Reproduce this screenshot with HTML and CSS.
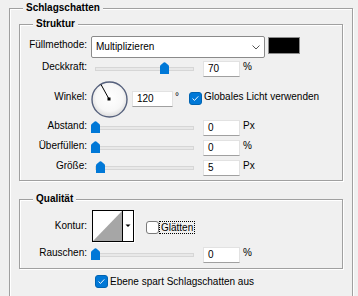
FILE: index.html
```html
<!DOCTYPE html>
<html lang="de">
<head>
    <meta charset="UTF-8">
    <title>Schlagschatten</title>
    <link rel="stylesheet" href="styles.css">
</head>
<body>
    <svg class="defs" width="0" height="0">
        <symbol id="thumb" viewBox="0 0 9 12">
            <path d="M0 4.6 Q0 3.6 1 2.8 L3.7 0.5 Q4.5 -0.1 5.3 0.5 L8 2.8 Q9 3.6 9 4.6 V12 H0 Z" fill="#0078d7"/>
        </symbol>
        <symbol id="tick" viewBox="0 0 13 13">
            <polyline points="3,6.5 5.3,8.8 9.8,4" fill="none" stroke="#fff" stroke-width="1.1"/>
        </symbol>
    </svg>

    <div class="group outer">
        <div class="group-title">Schlagschatten</div>

        <div class="group inner">
            <div class="group-title">Struktur</div>

            <div class="row row-mode">
                <span class="lbl">Füllmethode:</span>
                <div class="select">
                    <span>Multiplizieren</span>
                    <svg class="chevron" width="8" height="5" viewBox="0 0 8 5">
                        <polyline points="0.5,0.5 4,4 7.5,0.5" fill="none" stroke="#555" stroke-width="1"/>
                    </svg>
                </div>
                <div class="swatch"></div>
            </div>

            <div class="row row-field">
                <span class="lbl">Deckkraft:</span>
                <div class="slider">
                    <div class="track"></div>
                    <svg class="thumb" style="margin-left: 69px"><use href="#thumb"/></svg>
                </div>
                <div class="field">70</div>
                <span class="unit">%</span>
            </div>

            <div class="row row-angle">
                <span class="lbl">Winkel:</span>
                <svg class="dial" width="37" height="37" viewBox="0 0 37 37">
                    <defs>
                        <radialGradient id="dialFill" cx="50%" cy="45%" r="55%">
                            <stop offset="0" stop-color="#ffffff"/>
                            <stop offset="0.7" stop-color="#f7f7f7"/>
                            <stop offset="1" stop-color="#dcdcdc"/>
                        </radialGradient>
                    </defs>
                    <circle cx="18.5" cy="18.5" r="17.5" fill="url(#dialFill)" stroke="#55607c" stroke-width="1.4"/>
                    <line x1="18" y1="18" x2="10" y2="3.5" stroke="#000" stroke-width="1"/>
                    <rect x="16.5" y="16.5" width="3" height="3" fill="#000"/>
                </svg>
                <div class="field field-wide">120</div>
                <span class="unit deg">°</span>
                <span class="check on check-global"><svg><use href="#tick"/></svg></span>
                <span class="unit">Globales Licht verwenden</span>
            </div>

            <div class="row row-field row-abstand">
                <span class="lbl">Abstand:</span>
                <div class="slider">
                    <div class="track"></div>
                    <svg class="thumb" style="margin-left: 0px"><use href="#thumb"/></svg>
                </div>
                <div class="field">0</div>
                <span class="unit">Px</span>
            </div>

            <div class="row row-field row-gap">
                <span class="lbl">Überfüllen:</span>
                <div class="slider">
                    <div class="track"></div>
                    <svg class="thumb" style="margin-left: 0px"><use href="#thumb"/></svg>
                </div>
                <div class="field">0</div>
                <span class="unit">%</span>
            </div>

            <div class="row row-field row-gap">
                <span class="lbl">Größe:</span>
                <div class="slider">
                    <div class="track"></div>
                    <svg class="thumb" style="margin-left: 5px"><use href="#thumb"/></svg>
                </div>
                <div class="field">5</div>
                <span class="unit">Px</span>
            </div>
        </div>

        <div class="group inner quality">
            <div class="group-title">Qualität</div>

            <div class="row row-contour">
                <span class="lbl lbl-mid">Kontur:</span>
                <svg class="contour" width="42" height="32" viewBox="0 0 42 32">
                    <rect x="0.5" y="0.5" width="41" height="31" fill="#fff" stroke="#000"/>
                    <polygon points="1,31 30,1 30,31" fill="#a6a6a6"/>
                    <line x1="30.5" y1="0" x2="30.5" y2="32" stroke="#000"/>
                    <polygon points="33.5,14.5 38.5,14.5 36,17" fill="#000"/>
                </svg>
                <span class="check check-smooth"></span>
                <span class="focus">Glätten</span>
            </div>

            <div class="row row-field row-noise">
                <span class="lbl">Rauschen:</span>
                <div class="slider">
                    <div class="track"></div>
                    <svg class="thumb" style="margin-left: 0px"><use href="#thumb"/></svg>
                </div>
                <div class="field">0</div>
                <span class="unit">%</span>
            </div>
        </div>

        <div class="row row-knockout">
            <span class="check on"><svg><use href="#tick"/></svg></span>
            <span class="check-text">Ebene spart Schlagschatten aus</span>
        </div>
    </div>
</body>
</html>
```

FILE: styles.css
```css
* {
    box-sizing: border-box;
}

body {
    margin: 0;
    height: 296px;
    overflow: hidden;
    background: #f0f0f0;
    font-family: 'Liberation Sans', Arial, sans-serif;
    font-size: 10px;
    line-height: 12px;
    color: #000;
}

.defs {
    position: absolute;
}

/* Group boxes (etched frame + legend) */
.group {
    border: 1px solid #a0a0a0;
    box-shadow: inset 1px 1px 0 #fff, 1px 1px 0 #fff;
}

.group-title {
    width: max-content;
    margin: -7px 0 0 13px;
    padding: 0 3px;
    background: #f0f0f0;
    font-weight: bold;
}

.outer {
    width: 344px;
    height: 300px;
    margin: 8px 0 0 9px;
}

.inner {
    margin: 10px 9px 0;
    padding-bottom: 4px;
}

.quality {
    margin-top: 18px;
    padding-bottom: 5px;
}

/* Rows */
.row {
    display: flex;
    align-items: center;
}

.lbl {
    flex-shrink: 0;
    width: 67px;
    margin-bottom: 5px;
    text-align: right;
    white-space: nowrap;
}

.lbl-mid {
    margin-bottom: 0;
}

.unit {
    margin-left: 3px;
    margin-bottom: 5px;
    white-space: nowrap;
}

.row-mode {
    height: 22px;
    margin-top: 6px;
}

.row-field {
    height: 16px;
    margin-top: 3px;
}

.row-abstand {
    margin-top: 2px;
}

.row-gap {
    margin-top: 4px;
}

.row-angle {
    height: 38px;
    margin-top: 3px;
}

.row-contour {
    height: 32px;
    margin-top: 5px;
}

.row-noise {
    margin-top: 5px;
}

.row-knockout {
    height: 13px;
    margin: 6px 0 0 85px;
}

/* Dropdown + colour swatch */
.select {
    display: flex;
    align-items: center;
    justify-content: space-between;
    width: 174px;
    height: 22px;
    margin-left: 4px;
    padding: 0 4px;
    background: #fff;
    border: 1px solid #8a8a8a;
    border-radius: 2px;
}

.chevron {
    margin-top: 1px;
}

.swatch {
    align-self: flex-start;
    width: 32px;
    height: 17px;
    margin: 1px 0 0 3px;
    background: #000;
    border: 1px solid #8c8c8c;
}

/* Sliders */
.slider {
    display: grid;
    width: 103px;
    height: 16px;
    margin-left: 4px;
}

.slider > * {
    grid-area: 1 / 1;
}

.track {
    align-self: center;
    height: 4px;
    margin-left: 4px;
    background: #e8e8e8;
    border: 1px solid #d6d6d6;
}

.thumb {
    align-self: center;
    width: 9px;
    height: 12px;
    margin-bottom: 2px;
}

/* Number fields */
.field {
    width: 37px;
    height: 16px;
    margin-left: 9px;
    padding-left: 4px;
    line-height: 14px;
    background: #fff;
    border: 1px solid #e2e2e2;
    border-bottom-color: #a0a0a0;
}

.field-wide {
    width: 41px;
    margin-left: 4px;
}

.dial {
    margin-left: 4px;
}

.deg {
    margin-left: 2px;
}

/* Checkboxes */
.check {
    flex-shrink: 0;
    width: 13px;
    height: 13px;
    background: #fff;
    border: 1px solid #7a7a7a;
    border-radius: 3px;
}

.check.on {
    background: #0078d7;
    border-color: #0063b1;
}

.check svg {
    display: block;
    width: 11px;
    height: 11px;
}

.check-global {
    margin: 0 0 1px 10px;
}

.check-global + .unit {
    margin-left: 2px;
}

.check-smooth {
    margin: 3px 0 0 12px;
}

.focus {
    height: 13px;
    margin-top: 3px;
    padding: 0 1px;
    line-height: 11px;
    border: 1px dotted #000;
}

.check-text {
    margin-left: 2px;
    white-space: nowrap;
}

.contour {
    margin-left: 5px;
    box-shadow: 1px 1px 0 #fff;
}
```
